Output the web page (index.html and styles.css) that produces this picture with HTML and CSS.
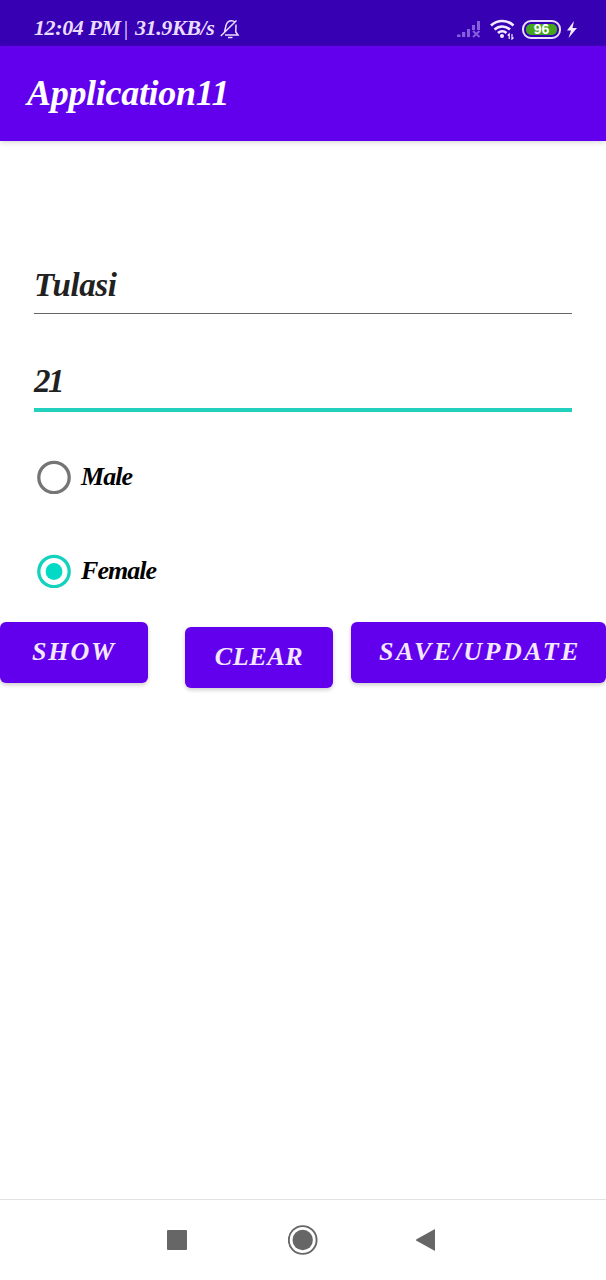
FILE: index.html
```html
<!DOCTYPE html>
<html lang="en">
<head>
<meta charset="utf-8">
<title>Application11</title>
<link rel="stylesheet" href="styles.css">
</head>
<body>
<div class="screen">
  <div class="status">
    <span class="clock">12:04 PM<span class="divider">|</span> 31.9KB/s</span>
    <svg class="bell" width="20" height="20" viewBox="0 0 20 20" fill="none" stroke="#e9dcff" stroke-width="1.500">
      <path d="M4.500 13L6 6.500C7 3 9 1.800 11.500 1.800C13 1.800 14 2.300 14.800 3.200M16 5.500L15.800 13L18 16H5M.8 17L16.500 1.500"/><path d="M8 18.500H12.500"/>
    </svg>
    <svg class="signal" width="24" height="18" viewBox="0 0 24 18" fill="#8560dc">
      <path d="M0 14.500h3.500V17H0zM5 12h3.200v5H5zM10 9h3v8h-3zM15 5h3v5h-3zM20 1h3v9h-3z"/><path d="M16 11l6.500 6M22.500 11L16 17" stroke="#8560dc" stroke-width="2"/>
    </svg>
    <svg class="wifi" width="26" height="21" viewBox="0 0 26 21" fill="none" stroke="#f3eaff" stroke-width="2.700">
      <path d="M1 6.500C7.500 .5 17 .5 23.500 6.500M4.500 10.500C9 6.500 15.500 6.500 20 10.500M8 14C10.500 11.800 14 11.800 16.500 14"/><circle cx="12" cy="17" r="2" fill="#f3eaff" stroke="none"/><path d="M19.200 20v-5l-1.500 1.500M22 15v5l1.500-1.500" stroke-width="1.200"/>
    </svg>
    <span class="battery"><span class="charge">96</span></span>
    <svg class="bolt" width="12" height="17" viewBox="0 0 12 17"><path d="M8 0L1 9.500h4L2.500 17L11 7H6.500z" fill="#f3eaff"/></svg>
  </div>
  <header class="appbar"><h1 class="title">Application11</h1></header>
  <main class="form">
    <div class="field name"><span>Tulasi</span></div>
    <div class="field age"><span>21</span></div>
    <div class="option male">
      <svg width="34" height="34" viewBox="0 0 34 34"><circle cx="17" cy="17.500" r="15.200" fill="none" stroke="#757575" stroke-width="3.300"/></svg>
      <span>Male</span>
    </div>
    <div class="option female">
      <svg width="34" height="34" viewBox="0 0 34 34"><circle cx="17" cy="17.500" r="15.200" fill="none" stroke="#14d2be" stroke-width="3.300"/><circle cx="17" cy="17.500" r="8.400" fill="#03dac5"/></svg>
      <span>Female</span>
    </div>
  </main>
  <div class="actions">
    <button class="btn show">SHOW</button>
    <button class="btn clear">CLEAR</button>
    <button class="btn save">SAVE/UPDATE</button>
  </div>
  <nav class="nav">
    <svg width="20" height="20" viewBox="0 0 20 20"><rect width="20" height="20" rx="1" fill="#666"/></svg>
    <svg class="home" width="30" height="30" viewBox="0 0 30 30"><circle cx="14.700" cy="15" r="13.900" fill="none" stroke="#666" stroke-width="1.900"/><circle cx="14.700" cy="15" r="10.200" fill="#666"/></svg>
    <svg class="back" width="19" height="22" viewBox="0 0 19 22"><path d="M19 0V22L.5 11.800Q-.5 11 .5 10.200z" fill="#666"/></svg>
  </nav>
</div>
</body>
</html>
```
FILE: styles.css
```css
* { box-sizing: border-box; }
body {
  margin: 0;
  background: #fff;
  font-family: "Liberation Serif", serif;
  font-style: italic;
  font-weight: 700;
}
svg { display: block; flex: none; }
.screen {
  width: 606px;
  height: 1280px;
  display: flex;
  flex-direction: column;
  overflow: hidden;
}
.status {
  flex: none;
  height: 46px;
  padding-left: 34px;
  display: flex;
  align-items: flex-start;
  background: linear-gradient(#3700b3 43px, #4300c4);
}
.clock {
  width: 186px;
  margin-top: 16px;
  font-size: 22px;
  line-height: 24px;
  letter-spacing: -0.38px;
  white-space: nowrap;
  color: #e9dcff;
}
.divider {
  margin: 0 2px 0 3px;
  font-style: normal;
  font-weight: 400;
}
.bell { margin-top: 19px; }
.signal { margin: 20px 0 0 217px; }
.wifi { margin: 19px 0 0 9px; }
.battery {
  width: 39px;
  height: 19px;
  margin: 20px 0 0 6px;
  padding: 2px;
  border: 2px solid #eadfff;
  border-radius: 9px;
}
.charge {
  display: block;
  height: 11px;
  border-radius: 5px;
  background: #43a51f;
  color: #fff;
  font: 700 14px/11px "Liberation Sans", sans-serif;
  text-align: center;
}
.bolt { margin: 21px 0 0 5px; }
.appbar {
  flex: none;
  height: 95px;
  padding: 26px 0 0 27px;
  background: #6200ee;
  box-shadow: 0 1px 6px rgba(0, 0, 0, 0.18);
}
.title {
  margin: 0;
  font-size: 36px;
  line-height: 42px;
  letter-spacing: -0.3px;
  color: #fff;
}
.form { flex: none; height: 481px; padding: 123px 34px 0; }
.field { color: #212121; font-size: 33px; line-height: 42px; }
.name { height: 50px; border-bottom: 1px solid #666; letter-spacing: -0.4px; }
.age { height: 98px; padding-top: 46px; border-bottom: 4px solid #23d0bd; }
.age span { letter-spacing: -2.5px; }
.option {
  height: 34px;
  margin-left: 3px;
  display: flex;
  align-items: center;
  gap: 10px;
  font-size: 26px;
  line-height: 34px;
  letter-spacing: -0.95px;
  color: #000;
}
.male { margin-top: 48px; }
.female { margin-top: 60px; }
.actions {
  flex: none;
  display: grid;
  grid-template-columns: 148px 148px 255px;
  column-gap: 18px;
  height: 66px;
}
.btn {
  height: 61px;
  padding: 0 0 2px;
  border: 0;
  border-radius: 6px;
  background: #6200ee;
  color: #f3e8ff;
  font: inherit;
  font-size: 26px;
  letter-spacing: 1.8px;
  box-shadow: 0 2px 4px rgba(0, 0, 0, 0.2);
}
.actions { column-gap: 0; justify-content: space-between; }
.clear { margin: 5px -9.5px 0 9.5px; letter-spacing: 0.7px; }
.save { letter-spacing: 2.5px; padding-left: 3px; }
.nav {
  flex: none;
  height: 81px;
  margin-top: auto;
  padding-left: 167px;
  display: flex;
  align-items: center;
  border-top: 1px solid #e2e2e2;
}
.home { margin-left: 101px; }
.back { margin-left: 98px; }
```
